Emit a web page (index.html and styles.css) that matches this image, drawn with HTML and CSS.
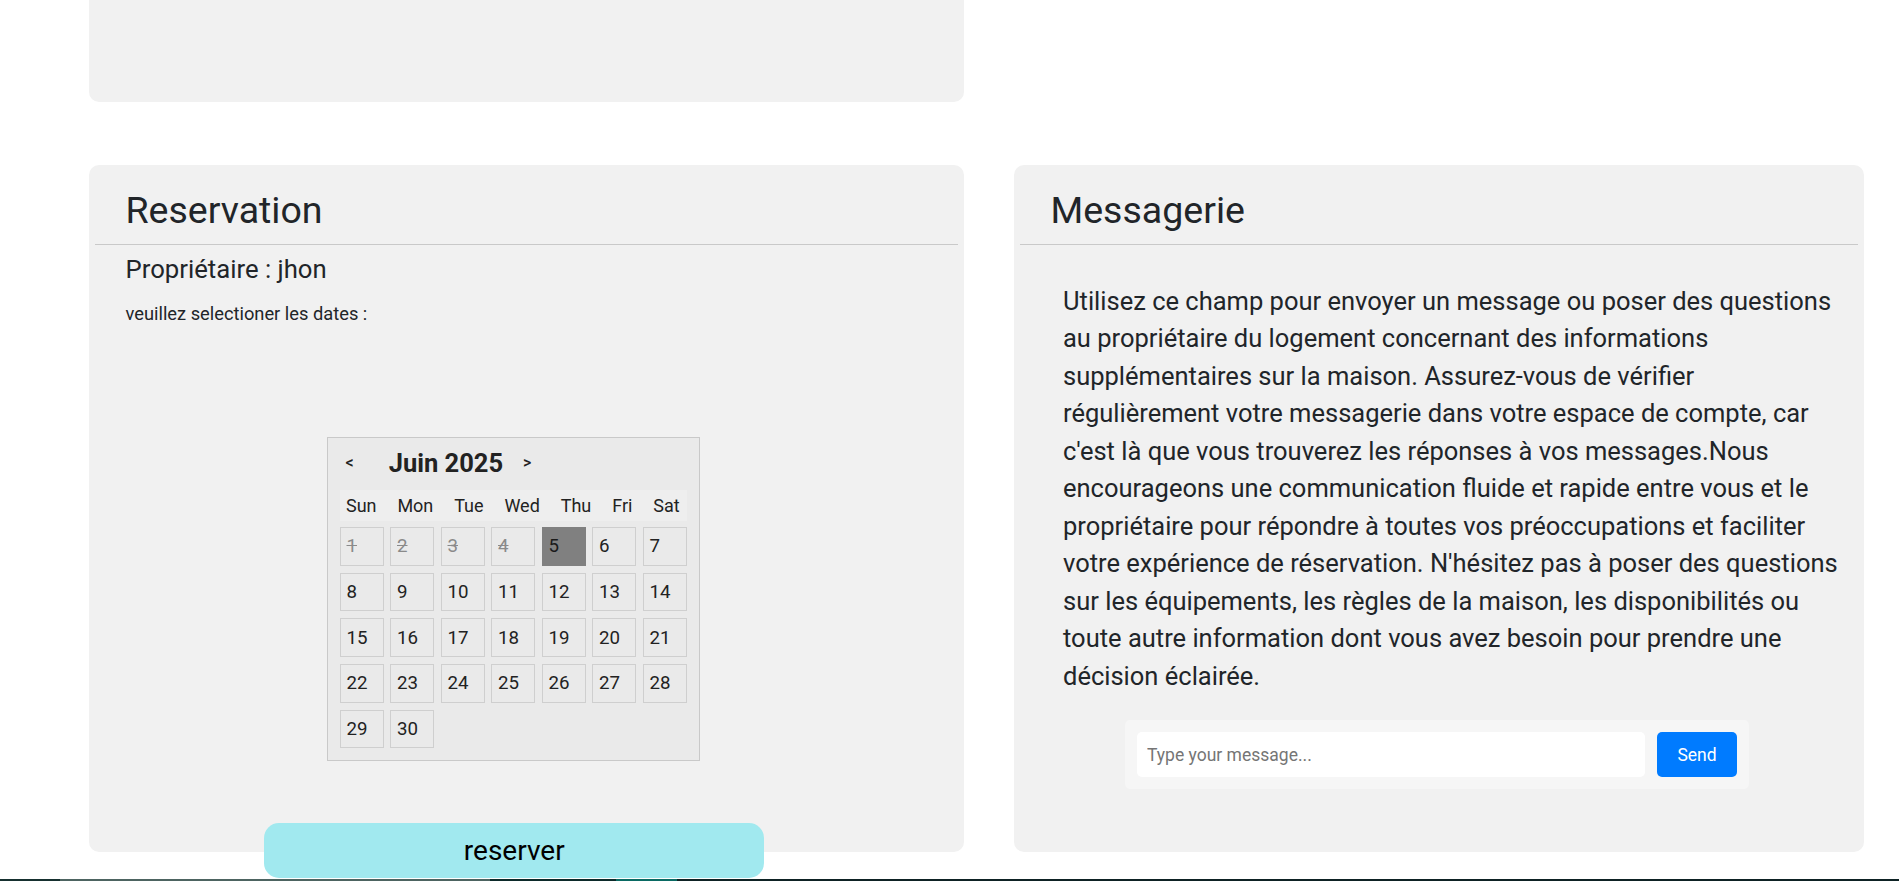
FILE: index.html
```html
<!DOCTYPE html>
<html lang="fr">
<head>
<meta charset="utf-8">
<title>Reservation</title>
<link rel="stylesheet" href="styles.css">
</head>
<body>
<div class="top-card"></div>

<main class="cards">
  <section class="card card-res">
    <div class="card-head"><h2>Reservation</h2></div>
    <div class="res-body">
      <p class="owner">Propriétaire : jhon</p>
      <p class="hint">veuillez selectioner les dates :</p>
      <div class="cal-area">
        <div class="cal">
          <div class="cal-head">
            <button class="nav">&lt;</button>
            <span class="cal-title">Juin 2025</span>
            <button class="nav nav-next">&gt;</button>
          </div>
          <div class="cal-week">
            <div class="week-row">
              <span>Sun</span><span>Mon</span><span>Tue</span><span>Wed</span><span>Thu</span><span>Fri</span><span>Sat</span>
            </div>
          </div>
          <div class="cal-grid">
            <span class="day off">1</span><span class="day off">2</span><span class="day off">3</span><span class="day off">4</span><span class="day sel">5</span><span class="day">6</span><span class="day">7</span>
            <span class="day">8</span><span class="day">9</span><span class="day">10</span><span class="day">11</span><span class="day">12</span><span class="day">13</span><span class="day">14</span>
            <span class="day">15</span><span class="day">16</span><span class="day">17</span><span class="day">18</span><span class="day">19</span><span class="day">20</span><span class="day">21</span>
            <span class="day">22</span><span class="day">23</span><span class="day">24</span><span class="day">25</span><span class="day">26</span><span class="day">27</span><span class="day">28</span>
            <span class="day">29</span><span class="day">30</span>
          </div>
        </div>
      </div>
      <button class="reserve">reserver</button>
    </div>
  </section>

  <section class="card card-msg">
    <div class="card-head"><h2>Messagerie</h2></div>
    <p class="msg-text">Utilisez ce champ pour envoyer un message ou poser des questions au propriétaire du logement concernant des informations supplémentaires sur la maison. Assurez-vous de vérifier régulièrement votre messagerie dans votre espace de compte, car c'est là que vous trouverez les réponses à vos messages.Nous encourageons une communication fluide et rapide entre vous et le propriétaire pour répondre à toutes vos préoccupations et faciliter votre expérience de réservation. N'hésitez pas à poser des questions sur les équipements, les règles de la maison, les disponibilités ou toute autre information dont vous avez besoin pour prendre une décision éclairée.</p>
    <div class="chat">
      <input class="chat-input" type="text" placeholder="Type your message...">
      <button class="chat-send">Send</button>
    </div>
  </section>
</main>

<footer class="footer">
  <span class="seg seg1"></span><span class="seg seg2"></span><span class="seg seg3"></span><span class="seg seg4"></span><span class="seg seg5"></span>
</footer>
</body>
</html>
```
FILE: styles.css
```css
* { box-sizing: border-box; }

html, body {
  margin: 0;
  padding: 0;
  background: #ffffff;
  font-family: Roboto, "Liberation Sans", Arial, sans-serif;
  color: #212529;
  overflow: hidden;
}

.top-card {
  width: 875px;
  height: 102px;
  margin-left: 89px;
  background: #f1f1f1;
  border-radius: 0 0 10px 10px;
}

.cards {
  display: flex;
  gap: 50px;
  padding-left: 89px;
  margin-top: 63px;
  margin-bottom: 27px;
}

.card {
  background: #f1f1f1;
  border-radius: 10px;
  padding: 6px;
  height: 687px;
}

.card-res { width: 875px; }
.card-msg { width: 850px; }

.card-head {
  padding: 16.5px 0 12px 30.5px;
  border-bottom: 1px solid #c9c9c9;
}

.card-head h2 {
  margin: 0;
  font-size: 37.5px;
  line-height: 44px;
  font-weight: 400;
  color: #212529;
}

.res-body {
  padding: 0 55px 0 30.5px;
}

.owner {
  margin: 9.5px 0 0;
  font-size: 25.7px;
  line-height: 30px;
}

.hint {
  margin: 19px 0 0;
  font-size: 18.3px;
  line-height: 22px;
}

.cal-area {
  display: flex;
  justify-content: center;
  margin-top: 112px;
  padding-right: 2.5px;
}

.cal {
  width: 373px;
  padding: 12px;
  border: 1px solid #c9c9c9;
  background: #eaeaea;
}

.cal-head {
  display: flex;
  align-items: center;
  height: 26px;
  padding-left: 6px;
  margin-bottom: 14px;
}

.nav {
  background: none;
  border: 0;
  padding: 0;
  font-family: inherit;
  font-size: 16px;
  font-weight: 500;
  color: #222;
  line-height: 26px;
}

.cal-title {
  margin-left: 35px;
  font-size: 25.5px;
  font-weight: 700;
  color: #222;
  line-height: 26px;
}

.nav-next { margin-left: 20px; }

.cal-week {
  height: 31px;
  background: #eeeeee;
  margin-bottom: 6px;
}

.week-row {
  display: flex;
  margin: 0 -3.5px 0 -4px;
}

.week-row span {
  flex: 1 1 auto;
  text-align: center;
  font-size: 18px;
  line-height: 32px;
  color: #222;
}

.cal-grid {
  display: grid;
  grid-template-columns: repeat(7, 44px);
  grid-auto-rows: 38.5px;
  gap: 7.2px 6.5px;
}

.day {
  display: flex;
  align-items: center;
  padding-left: 6px;
  border: 1px solid #cfcfcf;
  font-size: 18.7px;
  color: #222;
}

.day.off {
  color: #8a8a8a;
  text-decoration: line-through;
}

.day.sel {
  background: #808080;
  border-color: #808080;
  color: #1a1a1a;
}

.reserve {
  display: block;
  width: 500px;
  height: 55px;
  margin: 62px auto 0;
  border: 0;
  border-radius: 15px;
  background: #a1e9ef;
  color: #000;
  font-family: inherit;
  font-size: 28px;
}

.msg-text {
  margin: 38px 6px 0 43px;
  font-size: 25.5px;
  line-height: 37.5px;
  color: #212529;
}

.chat {
  display: flex;
  gap: 12px;
  width: 624px;
  margin: 25px 0 0 105px;
  padding: 12px;
  background: #f6f6f6;
  border-radius: 5px;
}

.chat-input {
  flex: 1;
  height: 45px;
  border: 0;
  border-radius: 5px;
  background: #ffffff;
  padding: 0 10px;
  font-family: inherit;
  font-size: 17.5px;
  color: #212529;
}

.chat-input::placeholder { color: #757575; }

.chat-send {
  width: 80px;
  height: 45px;
  border: 0;
  border-radius: 5px;
  background: #007bff;
  color: #ffffff;
  font-family: inherit;
  font-size: 17.5px;
}

.footer {
  display: flex;
  height: 40px;
}

.seg { height: 100%; }
.seg1 { width: 60px; background: #16302f; }
.seg2 { width: 430px; background: #4d6461; }
.seg3 { width: 126px; background: #0c2a2a; }
.seg4 { width: 61px; background: #0a6a63; }
.seg5 { flex: 1; background: #0e2224; }
```
